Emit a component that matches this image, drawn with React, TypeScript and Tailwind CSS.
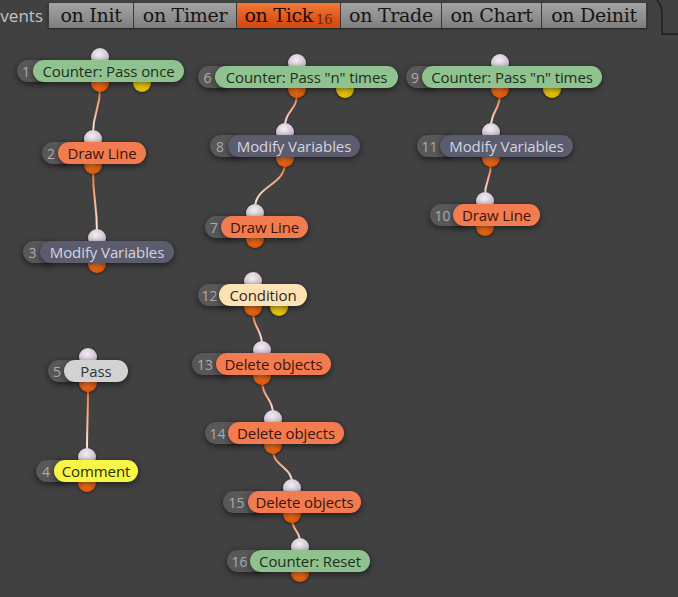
import React from "react";

const OFF = 36;

type Kind = "green" | "orange" | "mod" | "pass" | "comment" | "cond";

type N = {
  n: number;
  label: string;
  x: number; // number pill left
  px: number; // coloured pill left
  pr: number; // coloured pill right
  y: number; // pill top (page coords)
  cx: number; // connector x
  kind: Kind;
  yx?: number; // yellow output x
};

const nodes: N[] = [
  { n: 1, label: "Counter: Pass once", x: 17, px: 33, pr: 184, y: 60, cx: 100, kind: "green", yx: 142 },
  { n: 2, label: "Draw Line", x: 42, px: 58, pr: 146, y: 142, cx: 93, kind: "orange" },
  { n: 3, label: "Modify Variables", x: 23, px: 40, pr: 174, y: 241, cx: 97, kind: "mod" },
  { n: 5, label: "Pass", x: 48, px: 64, pr: 128, y: 360, cx: 88, kind: "pass" },
  { n: 4, label: "Comment", x: 36, px: 54, pr: 138, y: 460, cx: 87, kind: "comment" },
  { n: 6, label: 'Counter: Pass "n" times', x: 198, px: 215, pr: 398, y: 66, cx: 297, kind: "green", yx: 345 },
  { n: 8, label: "Modify Variables", x: 210, px: 228, pr: 360, y: 135, cx: 285, kind: "mod" },
  { n: 7, label: "Draw Line", x: 205, px: 221, pr: 308, y: 216, cx: 255, kind: "orange" },
  { n: 12, label: "Condition", x: 198, px: 219, pr: 307, y: 284, cx: 253, kind: "cond", yx: 279 },
  { n: 13, label: "Delete objects", x: 192, px: 216, pr: 331, y: 353, cx: 262, kind: "orange" },
  { n: 14, label: "Delete objects", x: 205, px: 228, pr: 344, y: 422, cx: 273, kind: "orange" },
  { n: 15, label: "Delete objects", x: 223, px: 248, pr: 361, y: 491, cx: 292, kind: "orange" },
  { n: 16, label: "Counter: Reset", x: 227, px: 250, pr: 370, y: 550, cx: 300, kind: "green" },
  { n: 9, label: 'Counter: Pass "n" times', x: 406, px: 422, pr: 602, y: 66, cx: 500, kind: "green", yx: 552 },
  { n: 11, label: "Modify Variables", x: 417, px: 440, pr: 573, y: 135, cx: 491, kind: "mod" },
  { n: 10, label: "Draw Line", x: 430, px: 453, pr: 540, y: 204, cx: 485, kind: "orange" },
];

const links: [number, number][] = [
  [1, 2],
  [2, 3],
  [5, 4],
  [6, 8],
  [8, 7],
  [12, 13],
  [13, 14],
  [14, 15],
  [15, 16],
  [9, 11],
  [11, 10],
];

const kindClass: Record<Kind, string> = {
  green: "bg-[#8fc28e] text-[#1c2f1c]",
  orange: "bg-[#f27b50] text-[#3d1409]",
  mod: "bg-[#5c5c6f] text-[#d4d4de]",
  pass: "bg-[#d2d2d2] text-[#333333]",
  comment: "bg-[#f7f545] text-[#2e2e10]",
  cond: "bg-[#fde2b6] text-[#33281a]",
};

const H = 22;

function byN(n: number) {
  return nodes.find((d) => d.n === n)!;
}

function Dot({ x, y, kind }: { x: number; y: number; kind: "in" | "out" | "yes" }) {
  const cls =
    kind === "in"
      ? "bg-[radial-gradient(circle_at_45%_35%,#f4eef4,#c9b9c9_70%,#a898a8)]"
      : kind === "out"
      ? "bg-[radial-gradient(circle_at_45%_35%,#ff8a3a,#e85f0c_60%,#c44c05)]"
      : "bg-[radial-gradient(circle_at_45%_35%,#ffe53a,#e6c200_60%,#c9a400)]";
  return (
    <div
      className={`absolute w-[18px] h-[18px] rounded-full ${cls} shadow-[0_1px_3px_rgba(0,0,0,0.5)]`}
      style={{ left: x - 9, top: y - 9 }}
    />
  );
}

function Node({ d }: { d: N }) {
  const numVis = d.px - d.x;
  return (
    <div className="absolute flex items-center" style={{ left: d.x, top: d.y - OFF, height: H }}>
      <div
        className="h-[22px] rounded-full bg-[#585858] text-[#acacac] text-[14px] flex items-center shadow-[0_2px_6px_rgba(0,0,0,0.55)]"
        style={{ width: numVis + 16 }}
      >
        <span className="flex justify-center pl-[2px]" style={{ width: numVis }}>
          {d.n}
        </span>
      </div>
      <div
        className={`absolute top-0 h-[22px] rounded-full flex items-center justify-center text-[15px] tracking-[-0.1px] whitespace-nowrap shadow-[0_2px_6px_rgba(0,0,0,0.55)] ${kindClass[d.kind]}`}
        style={{ left: numVis, width: d.pr - d.px }}
      >
        {d.label}
      </div>
    </div>
  );
}

function Tab({ label, active, badge }: { label: string; active?: boolean; badge?: string }) {
  return (
    <div
      className={`h-[25px] flex items-center justify-center border-r border-[#3a3a3a] text-[19px] leading-none ${
        active
          ? "bg-[linear-gradient(#f37a36,#e0561a_60%,#cf4a12)] text-[#1a0d05]"
          : "bg-[linear-gradient(#a3a3a3,#8e8e8e_60%,#7d7d7d)] text-[#151515]"
      }`}
      style={{ fontFamily: '"DejaVu Serif", "Liberation Serif", serif' }}
    >
      <span className="tracking-[-0.3px]">{label}</span>
      {badge && <span className="text-[13px] ml-[3px] mt-[7px] text-[#6b2a0a]">{badge}</span>}
    </div>
  );
}

export default function App() {
  return (
    <div
      className="w-[678px] h-[597px] bg-[#414141] flex flex-col overflow-hidden"
      style={{ fontFamily: '"Open Sans", "Noto Sans", sans-serif' }}
    >
      <div className="relative h-[36px] flex items-start">
        <div className="w-[48px] h-[31px] flex items-center justify-end pr-[5px] text-[17px] text-[#c4c4c4] overflow-hidden">
          <span className="whitespace-nowrap">Events</span>
        </div>
        <div className="mt-[3px] flex shadow-[0_1px_2px_rgba(0,0,0,0.5)] border-l border-[#3a3a3a]">
          <div className="w-[85px]"><Tab label="on Init" /></div>
          <div className="w-[103px]"><Tab label="on Timer" /></div>
          <div className="w-[104px]"><Tab label="on Tick" active badge="16" /></div>
          <div className="w-[101px]"><Tab label="on Trade" /></div>
          <div className="w-[100px]"><Tab label="on Chart" /></div>
          <div className="w-[105px]"><Tab label="on Deinit" /></div>
        </div>
        <svg className="absolute right-0 top-0" width="30" height="36" viewBox="648 0 30 36">
          <path d="M657 0 Q662 5 662 14 L662 34 L678 34" fill="none" stroke="#1c1c1c" strokeWidth="1.3" />
        </svg>
      </div>
      <div className="relative flex-1">
        <svg className="absolute inset-0" width="678" height="561">
          <defs>
            <linearGradient id="lk" x1="0" y1="0" x2="0" y2="1">
              <stop offset="0" stopColor="#ee6a1f" />
              <stop offset="0.4" stopColor="#f7a87e" />
              <stop offset="1" stopColor="#f6f0f4" />
            </linearGradient>
          </defs>
          {links.map(([a, b]) => {
            const s = byN(a);
            const t = byN(b);
            const x1 = s.cx;
            const y1 = s.y + H + 6 - OFF;
            const x2 = t.cx;
            const y2 = t.y - 8 - OFF;
            const d = (y2 - y1) * 0.5;
            return (
              <path
                key={`${a}-${b}`}
                d={`M${x1} ${y1} C${x1} ${y1 + d}, ${x2} ${y2 - d}, ${x2} ${y2}`}
                fill="none"
                stroke="url(#lk)"
                strokeWidth="2"
              />
            );
          })}
        </svg>
        {nodes.map((d) => (
          <React.Fragment key={`dots-${d.n}`}>
            <Dot x={d.cx} y={d.y - 3 - OFF} kind="in" />
            <Dot x={d.cx} y={d.y + H + 1 - OFF} kind="out" />
            {d.yx !== undefined && <Dot x={d.yx} y={d.y + H + 1 - OFF} kind="yes" />}
          </React.Fragment>
        ))}
        {nodes.map((d) => (
          <Node key={d.n} d={d} />
        ))}
      </div>
    </div>
  );
}
